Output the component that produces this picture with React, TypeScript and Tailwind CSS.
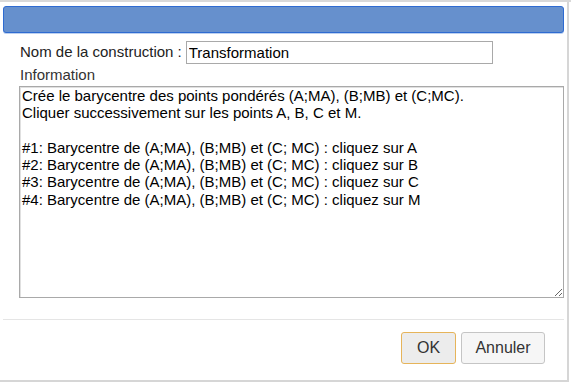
import React from "react"

const lines = [
  "Crée le barycentre des points pondérés (A;MA), (B;MB) et (C;MC).",
  "Cliquer successivement sur les points A, B, C et M.",
  "",
  "#1: Barycentre de (A;MA), (B;MB) et (C; MC) : cliquez sur A",
  "#2: Barycentre de (A;MA), (B;MB) et (C; MC) : cliquez sur B",
  "#3: Barycentre de (A;MA), (B;MB) et (C; MC) : cliquez sur C",
  "#4: Barycentre de (A;MA), (B;MB) et (C; MC) : cliquez sur M",
]

const App = () => {
  return (
    <div
      className="w-[571px] h-[383px] bg-white overflow-hidden text-[15px] text-[#222]"
      style={{ fontFamily: '"Liberation Sans", Arial, sans-serif' }}
    >
      <div className="h-[2px] bg-[#d9d9d9]" />
      <div className="w-[569px] h-[380px] border-r-2 border-b-2 border-[#d6d6d6] flex flex-col">
        <div className="mx-[3px] mt-[4px] h-[27px] bg-[#6690cd] border border-[#2e6bd1] rounded-[3px] shadow-[0_1px_0_#bcd0ef]" />
        <div className="flex flex-col pl-[19px] pr-[4px] pt-[8px]">
          <div className="flex items-center h-[23px]">
            <span className="ml-[1px] mr-[4px]">Nom de la construction :</span>
            <input
              className="w-[307px] h-[23px] border border-[#a9a9a9] px-[2px] outline-none text-[15px] text-black"
              defaultValue="Transformation"
            />
          </div>
          <div className="mt-[1px] ml-[1px] h-[20px] leading-[20px] text-[#333]">Information</div>
          <textarea
            className="mt-[1px] w-[545px] h-[212px] border border-[#a9a9a9] shadow-[inset_1px_1px_0_#e0e0e0] px-[2px] pt-0 text-[15px] leading-[17.3px] text-black resize-y outline-none"
            defaultValue={lines.join("\n")}
          />
        </div>
        <div className="mt-[21px] mx-[3px] h-px bg-[#e5e5e5]" />
        <div className="flex justify-end gap-[5px] pr-[22px] pt-[12px]">
          <button className="w-[55px] h-[32px] bg-[#ececec] border border-[#e6b45a] rounded-[3px] text-[16px] text-[#333]">
            OK
          </button>
          <button className="w-[84px] h-[32px] bg-[#f6f6f6] border border-[#c5c5c5] rounded-[3px] text-[16px] text-[#333]">
            Annuler
          </button>
        </div>
      </div>
    </div>
  )
}

export default App
